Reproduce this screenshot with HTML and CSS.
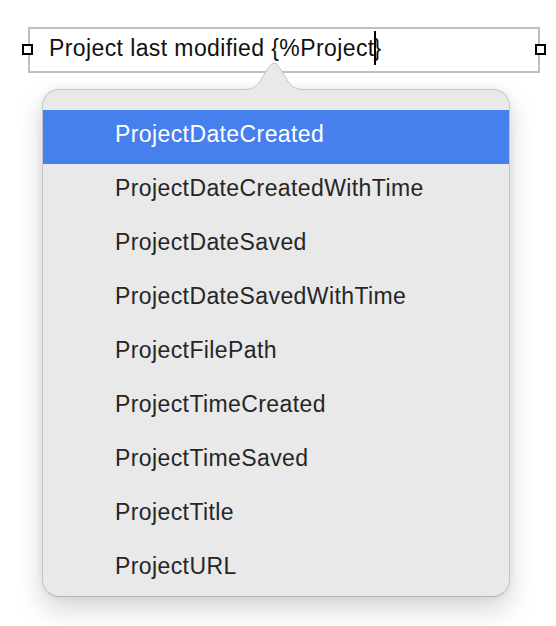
FILE: index.html
```html
<!DOCTYPE html>
<html>
<head>
<meta charset="utf-8">
<link rel="stylesheet" href="styles.css">
</head>
<body>
<div class="canvas">
  <div class="field">
    <span class="handle handle-left"></span>
    <span class="field-text">Project last modified {%Project<span class="caret"></span>}</span>
    <span class="handle handle-right"></span>
  </div>
  <div class="popover">
    <svg class="arrow" width="64" height="34" viewBox="0 0 64 34">
      <path d="M0 29.5 C9 29.5 13 27 18 18 L26 5.5 Q30 0.5 34 5.5 L42 18 C47 27 51 29.5 60 29.5 L60 33 L0 33 Z" fill="#e9e9e9"/>
      <path d="M0 29.5 C9 29.5 13 27 18 18 L26 5.5 Q30 0.5 34 5.5 L42 18 C47 27 51 29.5 60 29.5" fill="none" stroke="#c6c6c6" stroke-width="1"/>
    </svg>
    <ul class="menu">
      <li class="item selected">ProjectDateCreated</li>
      <li class="item">ProjectDateCreatedWithTime</li>
      <li class="item">ProjectDateSaved</li>
      <li class="item">ProjectDateSavedWithTime</li>
      <li class="item">ProjectFilePath</li>
      <li class="item">ProjectTimeCreated</li>
      <li class="item">ProjectTimeSaved</li>
      <li class="item">ProjectTitle</li>
      <li class="item">ProjectURL</li>
    </ul>
  </div>
</div>
</body>
</html>
```

FILE: styles.css
```css
html, body {
  margin: 0;
  padding: 0;
  background: #ffffff;
}

.canvas {
  padding-top: 27px;
  padding-bottom: 30px;
  font-family: "Liberation Sans", Arial, Helvetica, sans-serif;
}

.field {
  position: relative;
  margin-left: 28px;
  height: 42px;
  border: 2px solid #bfbfbf;
  box-sizing: content-box;
  padding: 0 0 0 19px;
  width: 489px;
}

.field-text {
  display: block;
  font-size: 23px;
  letter-spacing: 0.4px;
  line-height: 38px;
  padding-bottom: 4px;
  color: #111111;
  white-space: nowrap;
}

.caret {
  display: inline-block;
  width: 0;
  height: 34px;
  border-left: 2px solid #000000;
  margin-right: -2px;
  margin-left: -1px;
  vertical-align: -9px;
}

.handle {
  position: absolute;
  top: 15px;
  width: 7px;
  height: 7px;
  border: 2px solid #000000;
  background: #ffffff;
}

.handle-left {
  left: -8px;
}

.handle-right {
  right: -8px;
}

.popover {
  position: relative;
  margin-left: 42px;
  margin-top: 16px;
  width: 466px;
  background: #e9e9e9;
  border: 1px solid #c6c6c6;
  border-bottom-color: #b4b4b4;
  border-radius: 17px;
  box-shadow: 0 12px 28px rgba(0, 0, 0, 0.17), 0 0 8px rgba(0, 0, 0, 0.06);
}

.arrow {
  position: absolute;
  left: 201px;
  top: -30px;
  display: block;
}

.menu {
  list-style: none;
  margin: 0;
  padding: 20px 0 0 0;
}

.item {
  height: 48px;
  line-height: 48px;
  padding: 0 0 6px 72px;
  font-size: 23px;
  letter-spacing: 0.4px;
  color: #262626;
  white-space: nowrap;
}

.item.selected {
  background: #4680ee;
  color: #ffffff;
}
```
